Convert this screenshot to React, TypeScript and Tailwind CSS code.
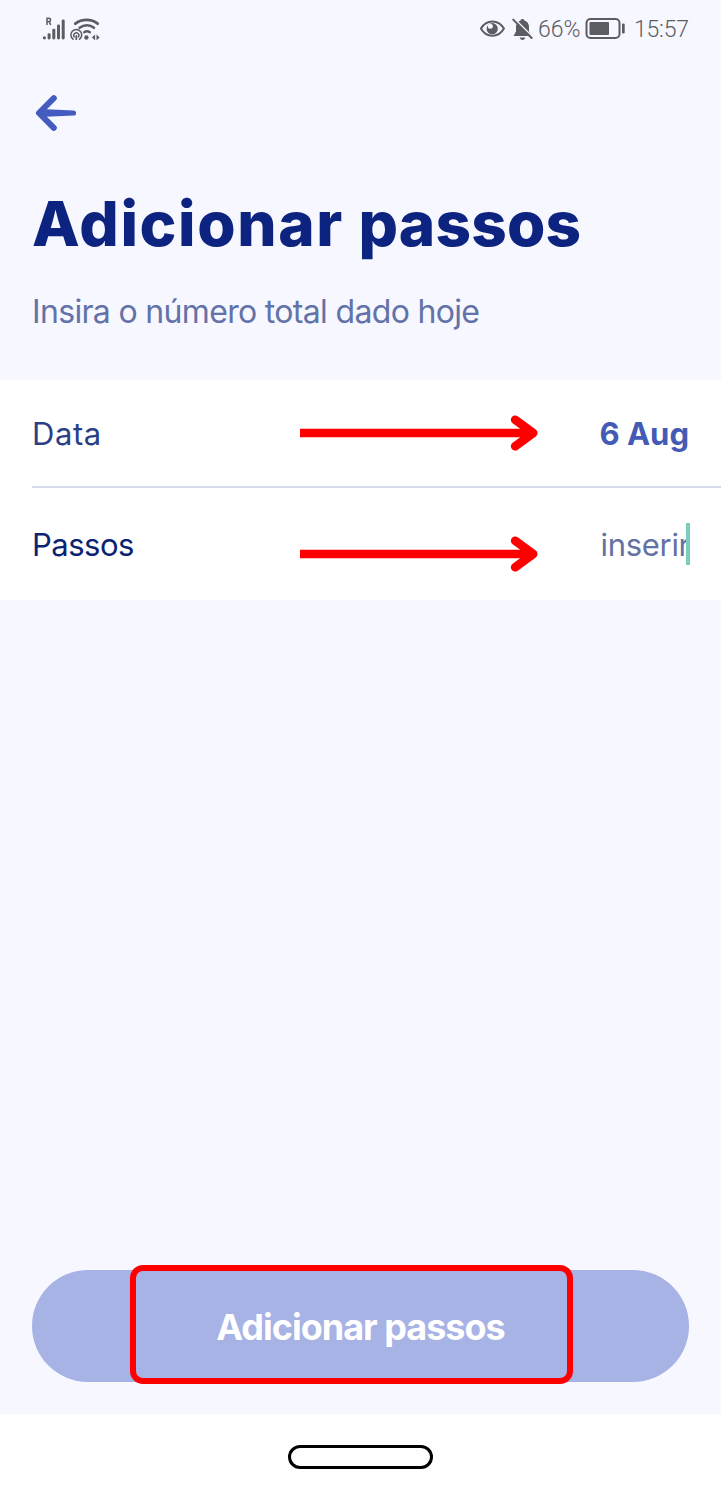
function SignalIcon() {
  return (
    <svg width="24" height="26" viewBox="0 0 24 26" fill="#5c5d62">
      <path
        d="M5 9V2.300h1.900c2.300 0 2.300 3.300 0 3.300H5m2.200 0L8.700 9"
        fill="none"
        stroke="#5c5d62"
        strokeWidth="1.500"
      />
      <circle cx="2.400" cy="21.800" r="1.600" />
      <rect x="5.600" y="17.200" width="3" height="6.200" rx="1.300" />
      <rect x="10.300" y="12.800" width="3" height="10.600" rx="1.300" />
      <rect x="15" y="8.400" width="3" height="15" rx="1.300" />
      <rect x="19.700" y="3.400" width="3" height="20" rx="1.300" />
    </svg>
  )
}

function WifiIcon() {
  return (
    <svg width="31" height="26" viewBox="0 0 31 26" fill="none" stroke="#5c5d62" strokeLinecap="round">
      <path d="M5.300 7.700c6.500-5 16-5 22.400 0" strokeWidth="2.800" />
      <path d="M9.600 11.800c4.500-3.300 10.200-3.300 14.400 0" strokeWidth="2.600" />
      <path d="M14.200 16.200c1.700-1.200 4-1.200 5.600 0" strokeWidth="2.400" />
      <circle cx="16.400" cy="21.500" r="2.200" fill="#5c5d62" stroke="none" />
      <path d="M3 23.200a5.400 5.400 0 1 1 6.600 0" strokeWidth="1.500" />
      <path d="M4.200 20.900a2.600 2.600 0 1 1 4.200 0" strokeWidth="1.400" />
      <path d="M6.300 20v3.200" strokeWidth="1.800" />
      <path d="M25.100 18.500v5.800l-3.200-2.900zM26.500 18.500v5.800l3.200-2.900z" fill="#5c5d62" stroke="none" />
    </svg>
  )
}

function EyeIcon() {
  return (
    <svg width="27" height="20" viewBox="0 0 27 20" fill="none">
      <path
        d="M1.900 9.600C4.300 5.200 8.500 2.400 13.400 2.400s9.100 2.800 11.500 7.200c-2.400 4.400-6.600 7.200-11.500 7.200S4.300 14 1.900 9.600Z"
        stroke="#5c5d62"
        strokeWidth="2"
      />
      <circle cx="13.200" cy="9.700" r="5.600" fill="#5c5d62" />
      <circle cx="11.300" cy="7.200" r="2.500" fill="#f6f7ff" />
    </svg>
  )
}

function BellOffIcon() {
  return (
    <svg width="21" height="23" viewBox="0 0 21 23" fill="none">
      <path
        d="M10.500 1c1 0 1.700.6 1.900 1.400 2.900.8 4.600 3.200 4.600 6.400v4.700l2.500 4.600H1.500L4 13.500V8.800c0-3.200 1.700-5.600 4.600-6.400C8.800 1.600 9.500 1 10.500 1Z"
        fill="#5c5d62"
      />
      <path d="M7.600 19.600h5.800c-.5 1.600-1.500 2.300-2.900 2.300s-2.400-.7-2.900-2.300Z" fill="#5c5d62" />
      <path d="M2.800 1 20.800 19" stroke="#f6f7ff" strokeWidth="1.600" />
      <path d="M1.200 1.600 19.600 20" stroke="#5c5d62" strokeWidth="2" strokeLinecap="round" />
    </svg>
  )
}

function BatteryIcon() {
  return (
    <svg width="41" height="22" viewBox="0 0 41 22" fill="none">
      <rect x="1.500" y="1" width="33" height="19" rx="4" stroke="#5c5d62" strokeWidth="2" />
      <rect x="4.500" y="4" width="19.500" height="13" rx="1" fill="#5c5d62" />
      <rect x="37" y="5.500" width="2.700" height="10" rx="1" fill="#5c5d62" />
    </svg>
  )
}

function StatusBar() {
  return (
    <div className="flex h-[58px] items-center justify-between pl-[42px] pr-[32px] font-['Roboto',sans-serif] text-[23px] text-[#5c5d62]">
      <div className="flex items-center gap-[4px]">
        <SignalIcon />
        <WifiIcon />
      </div>
      <div className="flex items-center">
        <EyeIcon />
        <span className="ml-[6px]">
          <BellOffIcon />
        </span>
        <span className="ml-[5px] mt-[3px] w-[47px] whitespace-nowrap font-[350]">66%</span>
        <BatteryIcon />
        <span className="ml-[8px] mt-[3px] w-[55px] whitespace-nowrap font-[350] tracking-[-0.2px]">15:57</span>
      </div>
    </div>
  )
}

function PointerArrow() {
  return (
    <svg width="240" height="38" viewBox="0 0 240 38" fill="none" stroke="#ff0000" strokeWidth="8.700">
      <path d="M0 19h230" />
      <path d="m215.200 5.800 18 13.200-18 13.200" strokeLinecap="round" strokeLinejoin="round" />
    </svg>
  )
}

export default function App() {
  return (
    <div className="flex h-[1500px] w-[721px] flex-col overflow-hidden bg-[#f6f7ff] font-['Inter',sans-serif]">
      <StatusBar />

      {/* Header */}
      <header className="h-[322px] pl-8 pt-[35px]">
        <button className="block pl-[3px]" aria-label="Voltar">
          <svg width="42" height="40" viewBox="0 0 42 40" fill="none">
            <path
              d="M18.800 5.200 4 20l14.800 14.800"
              stroke="#445bbf"
              strokeWidth="6"
              strokeLinecap="round"
              strokeLinejoin="round"
            />
            <path d="M4 20 13 13l-2 3.200 27.500 1.200a2.600 2.600 0 0 1 0 5.200L11 23.800l2 3.200Z" fill="#445bbf" />
          </svg>
        </button>
        <h1 className="mt-[51px] whitespace-nowrap text-[62px] font-extrabold leading-[80px] text-[#0c2380]">
          <span className="tracking-[1.600px]">Adicionar</span>{' '}
          <span className="ml-[1px] tracking-[0.200px]">passos</span>
        </h1>
        <p className="mt-[28px] whitespace-nowrap text-[32px] leading-[40px] tracking-[-0.670px] text-[#6372a8]">
          Insira o número total dado hoje
        </p>
      </header>

      {/* Form */}
      <section className="h-[220px] bg-white pl-8 text-[31px] leading-[40px]">
        <div className="flex h-[108px] items-center border-b-2 border-[#d6daeb] pr-8">
          <span className="w-[268px] pt-[2px] tracking-[0.600px] text-[#2b3f87]">Data</span>
          <PointerArrow />
          <span className="ml-auto whitespace-nowrap pt-[2px] font-bold text-[#445bb5]">6 Aug</span>
        </div>
        <div className="flex h-[112px] items-center pr-[31px]">
          <span className="w-[268px] pt-[2px] tracking-[-0.500px] text-[#0c2373]">Passos</span>
          <span className="mt-[19px]">
            <PointerArrow />
          </span>
          <span className="ml-auto flex items-center">
            <span className="whitespace-nowrap pt-[2px] tracking-[-0.300px] text-[#6471a3]">inserir</span>
            <span className="-ml-[4px] h-[42px] w-[4px] bg-[#7bcebd]" />
          </span>
        </div>
      </section>

      <div className="flex-1" />

      {/* Submit */}
      <footer className="px-8 pb-8">
        <button className="relative block h-[112px] w-[657px] rounded-full bg-[#a7b2e5] pt-[2px] text-[36px] font-bold tracking-[-1px] text-white">
          <span className="whitespace-nowrap">Adicionar passos</span>
          <span className="absolute -top-[5px] left-[98px] h-[119px] w-[443px] rounded-[13px] border-[6px] border-[#ff0000]" />
        </button>
      </footer>

      {/* System navigation */}
      <nav className="flex h-[86px] justify-center bg-[#fefefe] pt-[31px]">
        <div className="h-[24px] w-[145px] rounded-full border-[3px] border-black" />
      </nav>
    </div>
  )
}
